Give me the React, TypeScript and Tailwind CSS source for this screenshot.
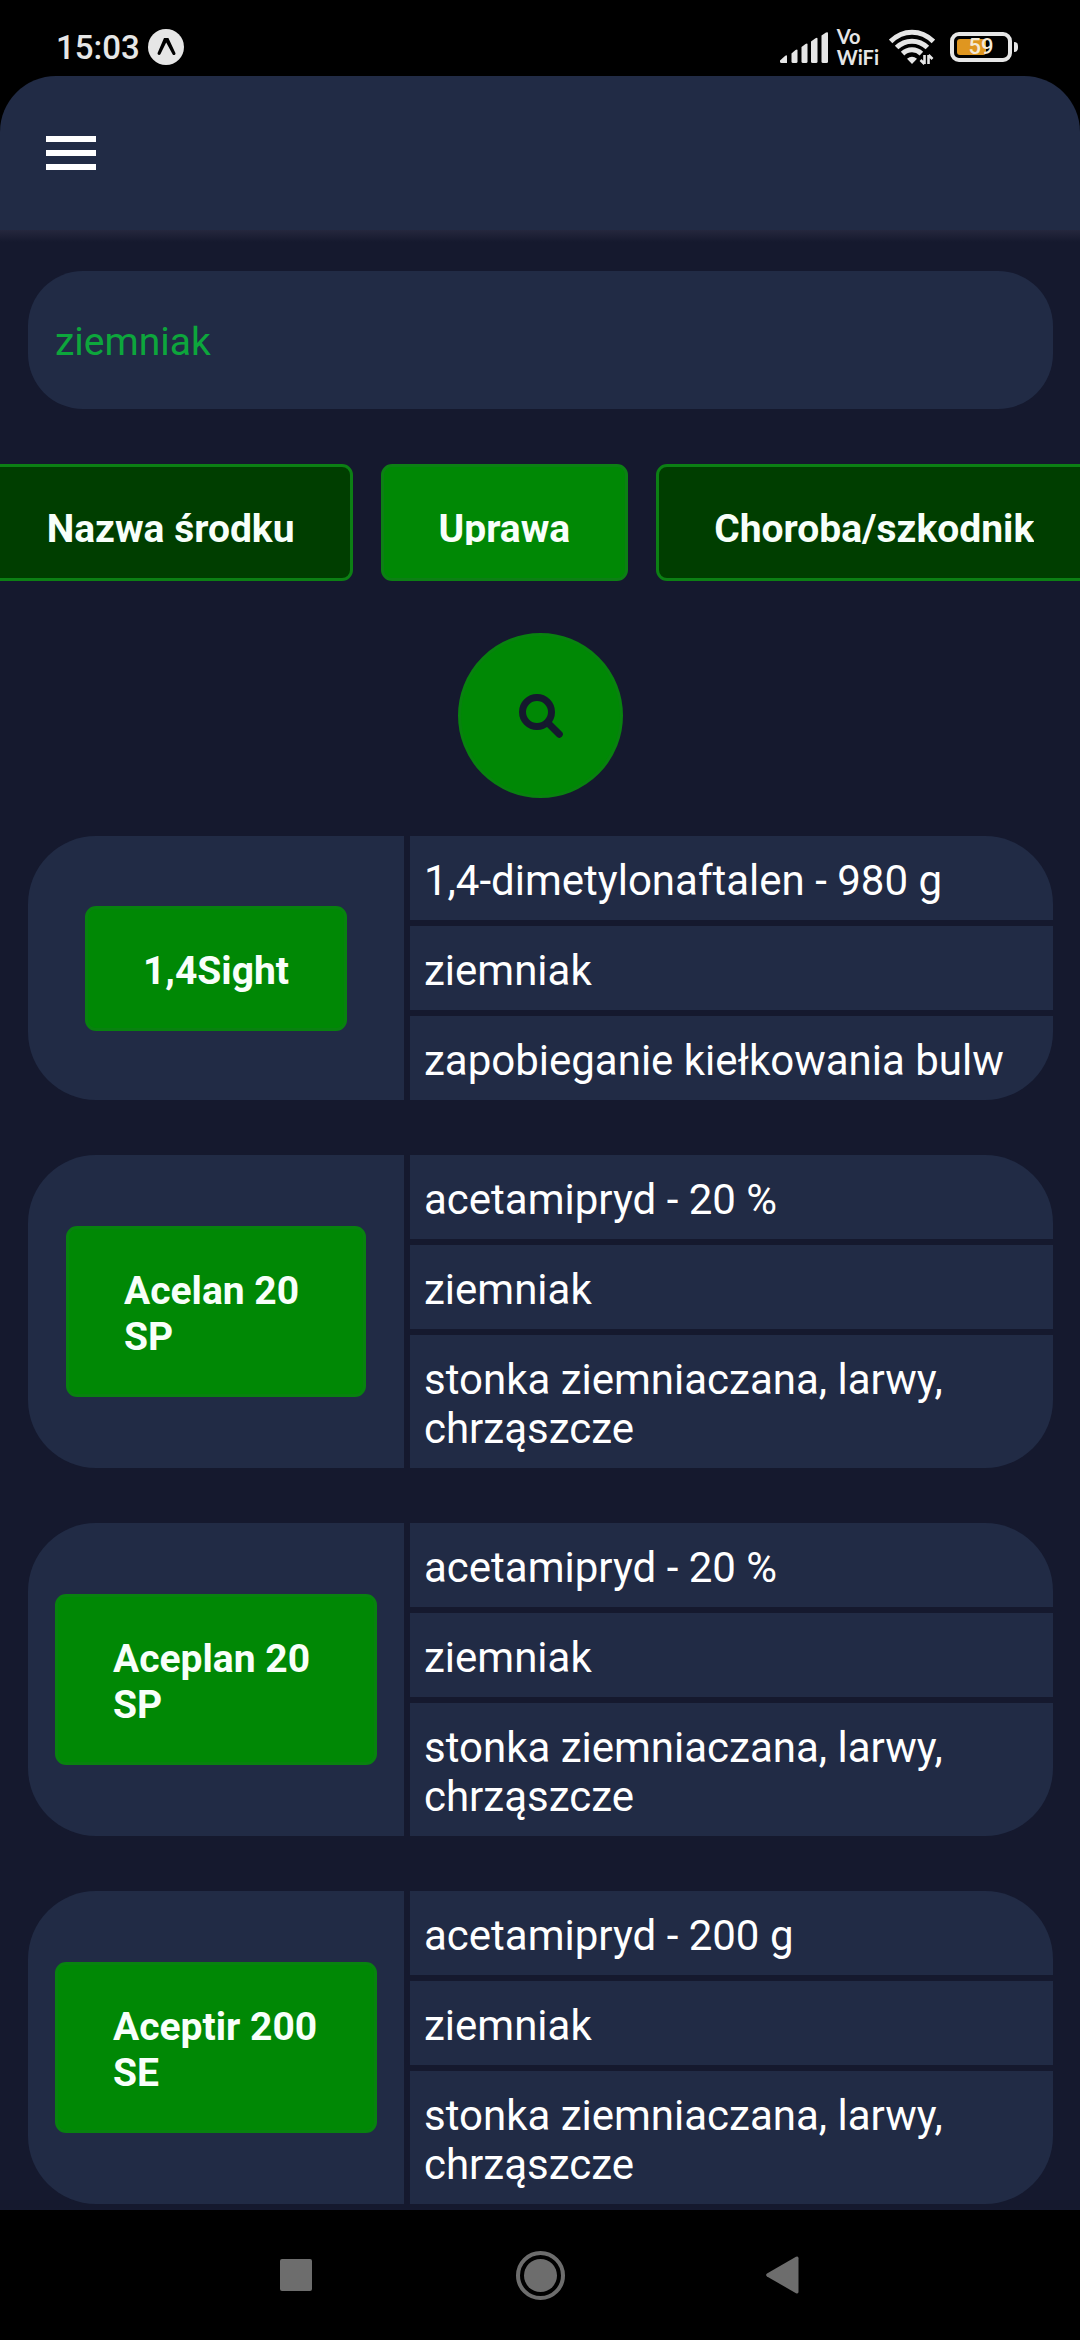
import { useState } from "react";

type Product = {
  name: string;
  substance: string;
  crop: string;
  target: string;
  buttonWidth: string;
};

const filters = ["Nazwa środku", "Uprawa", "Choroba/szkodnik"];

const products: Product[] = [
  {
    name: "1,4Sight",
    substance: "1,4-dimetylonaftalen - 980 g",
    crop: "ziemniak",
    target: "zapobieganie kiełkowania bulw",
    buttonWidth: "",
  },
  {
    name: "Acelan 20 SP",
    substance: "acetamipryd - 20 %",
    crop: "ziemniak",
    target: "stonka ziemniaczana, larwy, chrząszcze",
    buttonWidth: "w-[300px]",
  },
  {
    name: "Aceplan 20 SP",
    substance: "acetamipryd - 20 %",
    crop: "ziemniak",
    target: "stonka ziemniaczana, larwy, chrząszcze",
    buttonWidth: "w-[322px]",
  },
  {
    name: "Aceptir 200 SE",
    substance: "acetamipryd - 200 g",
    crop: "ziemniak",
    target: "stonka ziemniaczana, larwy, chrząszcze",
    buttonWidth: "w-[322px]",
  },
];

function ExpoIcon() {
  return (
    <svg width="36" height="36" viewBox="0 0 36 36" aria-hidden="true">
      <circle cx="18" cy="18" r="18" fill="#e6e6e6" />
      <path
        d="M16 9h4.400l7 15c.7 1.600-1.700 3-2.700 1.400L18.200 13.600 12.400 25.200c-1 1.700-3.600.4-2.700-1.400z"
        fill="#000"
      />
    </svg>
  );
}

function SignalIcon() {
  return (
    <svg width="48" height="31" viewBox="0 0 48 31" fill="#e6e6e6" aria-hidden="true">
      <path d="M0 28.500 5 24q2-1.500 2 .5V31H1.500Q0 31 0 29.500z" />
      <path d="M11.500 21.500 15.500 18q2-1.200 2 .5V29.500q0 1.500-1.500 1.500h-3q-1.500 0-1.500-1.500z" />
      <path d="M21.500 15 25.500 12q2-1.200 2 .5v17q0 1.500-1.500 1.500h-3q-1.500 0-1.500-1.500z" />
      <path d="M31 9.500 35.500 6.200q2-1.200 2 .5v22.800q0 1.500-1.500 1.500h-3.500Q31 31 31 29.500z" />
      <path d="M41.500 3.500 46 .6q2-1 2 .7v28.200q0 1.500-1.500 1.500H43q-1.500 0-1.500-1.500z" />
    </svg>
  );
}

function WifiIcon() {
  return (
    <svg width="46" height="36" viewBox="0 0 46 36" fill="none" aria-hidden="true">
      <g stroke="#e6e6e6" strokeWidth="5">
        <path d="M1.600 12.500Q11 3.300 23 3.300t21.400 9.200" />
        <path d="M7.600 18.600Q14 12.200 23 12.200t15.400 6.400" />
        <path d="M13.600 24.600Q17.500 20.800 23 20.800t9.400 3.800" />
      </g>
      <path d="M18 29.800Q23 25.500 28 29.800L23 35z" fill="#e6e6e6" />
      <path d="M35.500 26v9M39.500 35v-9M31.500 31l4 4M43.500 30l-4-4" stroke="#e6e6e6" strokeWidth="2.600" />
    </svg>
  );
}

function Battery() {
  return (
    <div className="flex items-center gap-0.5">
      <div className="relative flex h-[30px] w-[62px] items-center rounded-[9px] border-4 border-[#e6e6e6] p-[3px]">
        <div className="h-4 w-[29px] rounded-[3px] bg-[#df9620]" />
        <span className="absolute inset-0 flex items-center justify-center text-[22px] leading-none font-medium text-[#f4ead8]">
          59
        </span>
      </div>
      <div className="h-2.5 w-1 rounded-r-sm bg-[#e6e6e6]" />
    </div>
  );
}

function StatusBar() {
  return (
    <div className="flex h-[76px] items-start justify-between bg-black pr-[62px] pl-14 text-[#e6e6e6]">
      <div className="flex items-start gap-2 pt-[29px]">
        <span className="text-[33px] leading-[38px] font-medium">15:03</span>
        <ExpoIcon />
      </div>
      <div className="flex items-center pt-[26px]">
        <SignalIcon />
        <div className="ml-[9px] font-['Lato'] text-[20px] leading-[21px] font-bold">
          <div>Vo</div>
          <div>WiFi</div>
        </div>
        <div className="ml-2.5">
          <WifiIcon />
        </div>
        <div className="ml-[15px]">
          <Battery />
        </div>
      </div>
    </div>
  );
}

function Header() {
  return (
    <header className="bg-black">
      <div className="flex h-[154px] items-center rounded-t-[56px] bg-[#212b45] px-[46px]">
        <button type="button" aria-label="Menu" className="flex w-[50px] flex-col gap-2">
          <span className="h-1.5 bg-white" />
          <span className="h-1.5 bg-white" />
          <span className="h-1.5 bg-white" />
        </button>
      </div>
    </header>
  );
}

function ProductCard({ product }: { product: Product }) {
  return (
    <article className="flex gap-1.5 overflow-hidden rounded-[68px] text-[42px] leading-[49px] text-white">
      <div className="flex w-[376px] shrink-0 items-center justify-center bg-[#212b45]">
        <button
          type="button"
          className={`${product.buttonWidth} rounded-[11px] border-3 border-[#08820f] bg-[#008805] px-[55px] pt-[39px] pb-[34px] text-left text-[39px] leading-[46px] font-bold text-[#f8fffa]`}
        >
          {product.name}
        </button>
      </div>
      <div className="flex min-w-0 flex-1 flex-col gap-1.5">
        <p className="bg-[#212b45] px-3.5 pt-5 pb-[15px]">{product.substance}</p>
        <p className="bg-[#212b45] px-3.5 pt-5 pb-[15px]">{product.crop}</p>
        <p className="bg-[#212b45] px-3.5 pt-5 pb-[15px]">{product.target}</p>
      </div>
    </article>
  );
}

function NavBar() {
  return (
    <nav className="flex h-[130px] items-center justify-center bg-black">
      <button type="button" aria-label="Recent apps" className="flex w-[244px] justify-center">
        <span className="size-8 rounded-xs bg-[#6d6d6d]" />
      </button>
      <button type="button" aria-label="Home" className="flex w-[244px] justify-center">
        <span className="flex size-[49px] items-center justify-center rounded-full border-4 border-[#6d6d6d]">
          <span className="size-[33px] rounded-full bg-[#6d6d6d]" />
        </span>
      </button>
      <button type="button" aria-label="Back" className="flex w-[244px] justify-center">
        <svg width="36" height="38" viewBox="0 0 36 38" aria-hidden="true">
          <path d="M1 17.500 30 .8q2.500-1 2.500 1.500v33.400q0 2.500-2.500 1.500L1 20.500q-1.800-1.500 0-3z" fill="#6d6d6d" />
        </svg>
      </button>
    </nav>
  );
}

export default function App() {
  const [query, setQuery] = useState("ziemniak");
  const [active, setActive] = useState("Uprawa");

  return (
    <div className="flex min-h-screen flex-col overflow-hidden bg-[#15192e] font-['Roboto',sans-serif]">
      <StatusBar />
      <Header />
      <div className="h-3 bg-linear-to-b from-[#25273d] to-[#15192e]" />
      <main className="flex flex-1 flex-col pt-[29px] pr-[27px] pb-1.5 pl-7">
        <input
          type="text"
          aria-label="Szukaj"
          value={query}
          onChange={(event) => setQuery(event.target.value)}
          className="h-[138px] w-full rounded-[55px] bg-[#212b45] px-[27px] pt-1 text-[39px] text-[#0da63c] outline-none"
        />
        <div className="mt-[55px] flex justify-center gap-7">
          {filters.map((filter) => (
            <button
              key={filter}
              type="button"
              aria-pressed={filter === active}
              onClick={() => setActive(filter)}
              className={`shrink-0 rounded-[11px] border-3 border-[#0c8014] px-[55px] pt-[39px] pb-[33px] text-[39px] leading-[46px] font-bold text-[#f8fffa] ${
                filter === active ? "bg-[#008805]" : "bg-[#003e00]"
              }`}
            >
              <span className="block h-[39px] overflow-hidden whitespace-nowrap">{filter}</span>
            </button>
          ))}
        </div>
        <button
          type="button"
          aria-label="Wyszukaj"
          className="mt-[52px] flex size-[165px] items-center justify-center self-center rounded-full border-3 border-[#08820f] bg-[#008805]"
        >
          <svg width="44" height="44" viewBox="0 0 44 44" fill="none" stroke="#15192e" strokeWidth="7" aria-hidden="true">
            <circle cx="18" cy="18" r="14.500" />
            <path d="M29 29 40.300 40.300" strokeLinecap="round" />
          </svg>
        </button>
        <section aria-label="Wyniki" className="mt-[38px] flex flex-col gap-[55px]">
          {products.map((product) => (
            <ProductCard key={product.name} product={product} />
          ))}
        </section>
      </main>
      <NavBar />
    </div>
  );
}
